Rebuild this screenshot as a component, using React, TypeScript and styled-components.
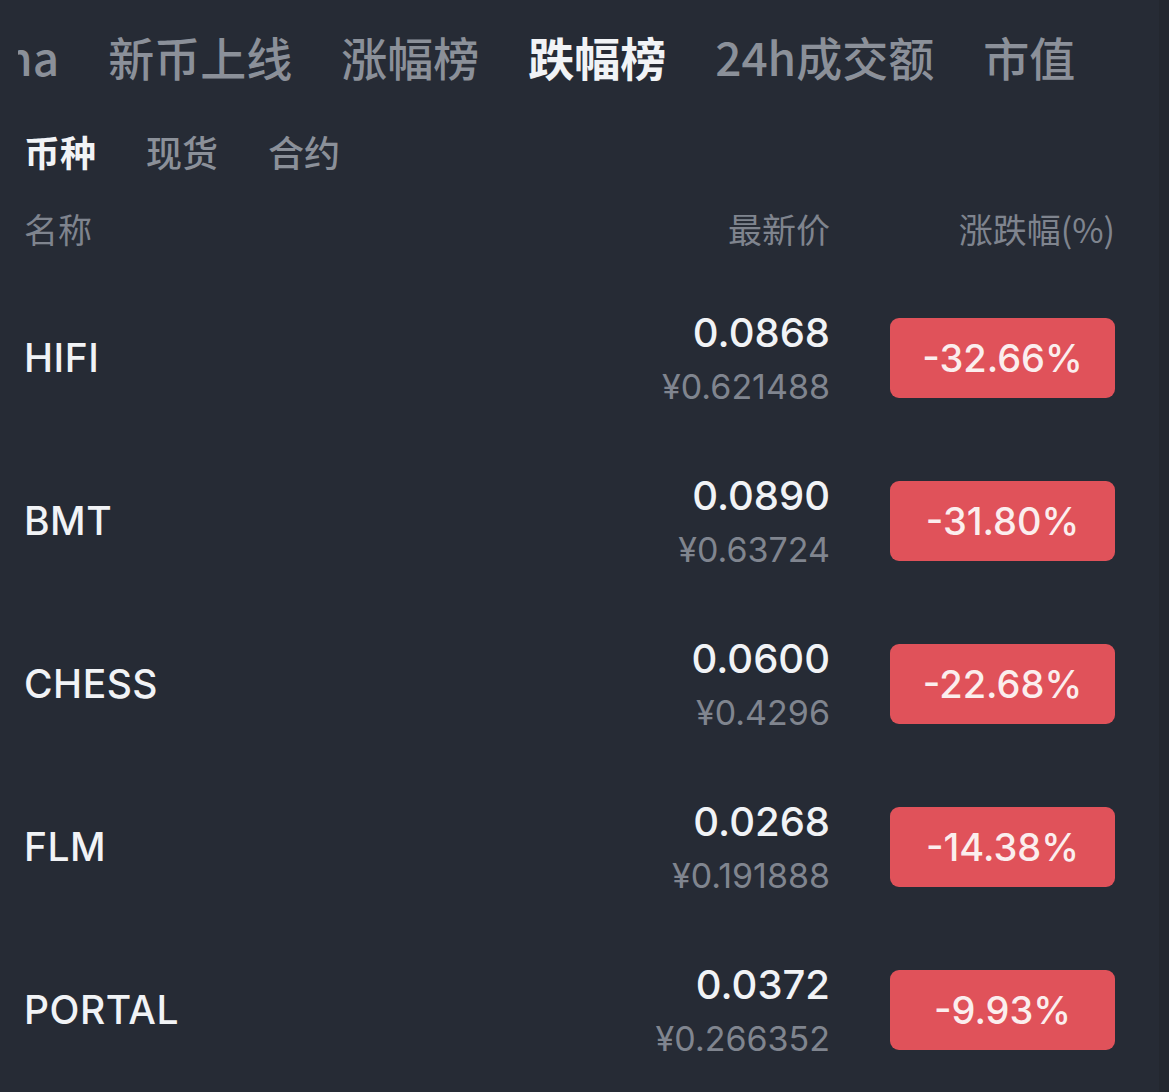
import styled, { createGlobalStyle } from 'styled-components';

const GlobalStyle = createGlobalStyle`
  html, body {
    margin: 0;
    padding: 0;
    background: #262b35;
  }
  body {
    font-family: Inter, "Noto Sans CJK SC", sans-serif;
    -webkit-font-smoothing: antialiased;
  }
`;

const Page = styled.div`
  width: 1169px;
  height: 1092px;
  background: #262b35;
  overflow: hidden;
  box-sizing: border-box;
  padding: 0 44px 0 24px;
  border-right: 10px solid #23272f;
  display: flex;
  flex-direction: column;
`;

const TabViewport = styled.div`
  flex-shrink: 0;
  margin-left: -6px;
  height: 114px;
  padding-bottom: 2px;
  box-sizing: border-box;
  overflow: hidden;
  display: flex;
  align-items: center;
`;

const TabStrip = styled.div`
  display: flex;
  gap: 49px;
  margin-left: -14px;
  white-space: nowrap;
`;

const Tab = styled.span<{ $active?: boolean }>`
  font-family: "Noto Sans CJK SC", Inter, sans-serif;
  font-size: 46px;
  font-weight: ${({ $active }) => ($active ? 700 : 500)};
  color: ${({ $active }) => ($active ? '#f1f3f6' : '#8b9099')};
  line-height: 1;
`;

const SubTabs = styled.div`
  flex-shrink: 0;
  display: flex;
  gap: 50px;
  height: 74px;
  align-items: center;
`;

const SubTab = styled.span<{ $active?: boolean }>`
  font-family: "Noto Sans CJK SC", sans-serif;
  font-size: 36px;
  font-weight: ${({ $active }) => ($active ? 700 : 500)};
  color: ${({ $active }) => ($active ? '#f1f3f6' : '#8b9099')};
  line-height: 1;
`;

const HeaderRow = styled.div`
  flex-shrink: 0;
  display: flex;
  align-items: center;
  height: 88px;
  padding-bottom: 6px;
  box-sizing: border-box;
`;

const HeaderCell = styled.span<{ $width?: number; $align?: string }>`
  font-family: "Noto Sans CJK SC", sans-serif;
  font-size: 34px;
  color: #7f848e;
  flex: ${({ $width }) => ($width ? `0 0 ${$width}px` : '1')};
  text-align: ${({ $align }) => $align || 'left'};
  line-height: 1;
`;

const Row = styled.div`
  flex-shrink: 0;
  display: flex;
  align-items: center;
  height: 163px;
`;

const Name = styled.div`
  flex: 1;
  font-size: 39px;
  font-weight: 500;
  color: #f1f3f6;
  letter-spacing: 0.5px;
`;

const PriceCol = styled.div`
  display: flex;
  flex-direction: column;
  align-items: flex-end;
  gap: 12px;
`;

const Price = styled.div`
  font-size: 40px;
  font-weight: 500;
  color: #f1f3f6;
  line-height: 46px;
`;

const Fiat = styled.div`
  font-size: 34px;
  font-weight: 400;
  color: #80858f;
  line-height: 38px;
`;

const Badge = styled.div`
  margin-left: 60px;
  width: 225px;
  height: 80px;
  border-radius: 9px;
  background: #e0525a;
  color: #fbeeee;
  font-size: 38px;
  font-weight: 500;
  display: flex;
  align-items: center;
  justify-content: center;
`;

const tabs = ['na', '新币上线', '涨幅榜', '跌幅榜', '24h成交额', '市值'];
const subTabs = ['币种', '现货', '合约'];

const rows = [
  { name: 'HIFI', price: '0.0868', fiat: '¥0.621488', change: '-32.66%' },
  { name: 'BMT', price: '0.0890', fiat: '¥0.63724', change: '-31.80%' },
  { name: 'CHESS', price: '0.0600', fiat: '¥0.4296', change: '-22.68%' },
  { name: 'FLM', price: '0.0268', fiat: '¥0.191888', change: '-14.38%' },
  { name: 'PORTAL', price: '0.0372', fiat: '¥0.266352', change: '-9.93%' },
];

export default function App() {
  return (
    <>
      <GlobalStyle />
      <Page>
        <TabViewport>
          <TabStrip>
            {tabs.map((t) => (
              <Tab key={t} $active={t === '跌幅榜'}>
                {t}
              </Tab>
            ))}
          </TabStrip>
        </TabViewport>
        <SubTabs>
          {subTabs.map((t, i) => (
            <SubTab key={t} $active={i === 0}>
              {t}
            </SubTab>
          ))}
        </SubTabs>
        <HeaderRow>
          <HeaderCell>名称</HeaderCell>
          <HeaderCell $align="right">最新价</HeaderCell>
          <HeaderCell $width={285} $align="right">
            涨跌幅(%)
          </HeaderCell>
        </HeaderRow>
        {rows.map((r) => (
          <Row key={r.name}>
            <Name>{r.name}</Name>
            <PriceCol>
              <Price>{r.price}</Price>
              <Fiat>{r.fiat}</Fiat>
            </PriceCol>
            <Badge>{r.change}</Badge>
          </Row>
        ))}
      </Page>
    </>
  );
}
